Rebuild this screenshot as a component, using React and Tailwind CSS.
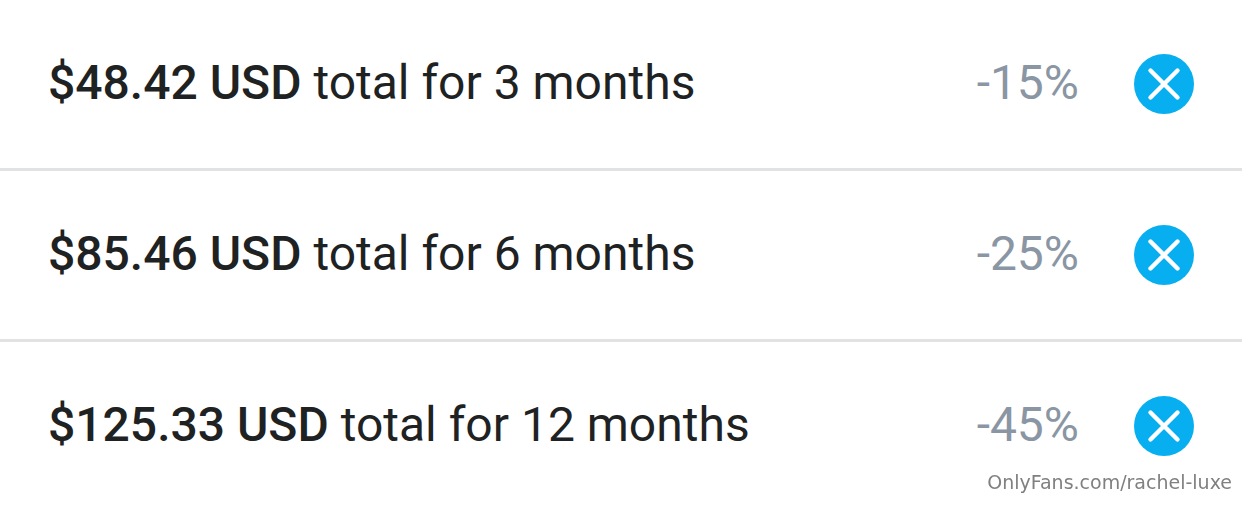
const plans = [
  { price: '$48.42 USD', term: 'total for 3 months', discount: '-15%' },
  { price: '$85.46 USD', term: 'total for 6 months', discount: '-25%' },
  { price: '$125.33 USD', term: 'total for 12 months', discount: '-45%' },
];

function PlanRow({ price, term, discount }) {
  return (
    <li className="flex items-start border-t-3 border-[#e0e2e4] py-[54px] pr-12 pl-12 first:border-t-0">
      <p className="flex-1 text-[48px] leading-[58px] text-[#1f2222]">
        <span className="font-medium">{price}</span> {term}
      </p>
      <span className="mr-[55px] text-[48px] leading-[58px] text-[#8a96a3]">{discount}</span>
      <button
        type="button"
        aria-label={`Remove ${term}`}
        className="flex size-[60px] items-center justify-center rounded-full bg-[#07aff0] text-white"
      >
        <svg viewBox="0 0 60 60" className="size-full" fill="none" stroke="currentColor" strokeWidth="4.4" strokeLinecap="round">
          <path d="M16.5 16.5 43.5 43.5M43.5 16.5 16.5 43.5" />
        </svg>
      </button>
    </li>
  );
}

export default function App() {
  return (
    <main className="min-h-screen bg-white font-[Roboto,sans-serif]">
      <ul>
        {plans.map((plan) => (
          <PlanRow key={plan.term} {...plan} />
        ))}
      </ul>
      <a
        href="#profile"
        className="fixed right-2.5 bottom-3 font-['DejaVu_Sans',sans-serif] text-[19px] leading-[26px] text-[#808080]"
      >
        OnlyFans.com/rachel-luxe
      </a>
    </main>
  );
}
